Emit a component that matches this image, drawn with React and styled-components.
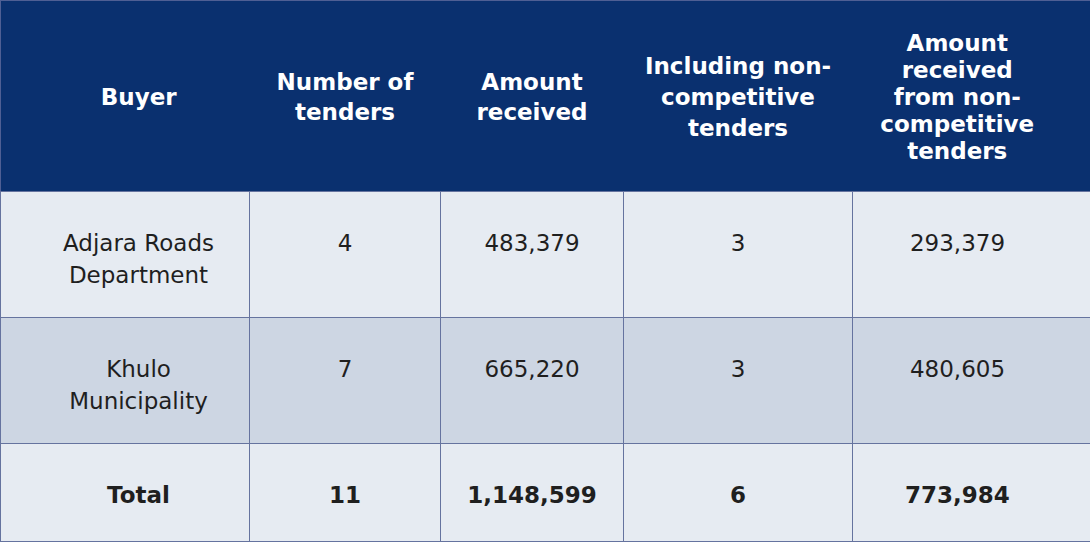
import styled, { createGlobalStyle } from "styled-components";

const GlobalStyle = createGlobalStyle`
  html, body {
    margin: 0;
    padding: 0;
    background: #ffffff;
  }
  body {
    font-family: "DejaVu Sans", Verdana, sans-serif;
  }
`;

const Table = styled.table`
  width: 1090px;
  border-collapse: collapse;
  table-layout: fixed;
  border: 1px solid #4f5f94;
  font-family: "DejaVu Sans", Verdana, sans-serif;
`;

const HeadCell = styled.th`
  background: #0a306f;
  color: #ffffff;
  font-weight: 700;
  font-size: 23px;
  line-height: ${(p) => p.lh || 30}px;
  text-align: center;
  vertical-align: middle;
  height: 191px;
  padding: 2px ${(p) => p.pr || 16}px 0 ${(p) => p.pl || 16}px;
  box-sizing: border-box;
`;

const Row = styled.tr`
  background: ${(p) => (p.shaded ? "#cdd6e3" : "#e6ebf2")};
  height: ${(p) => p.h}px;
`;

const Cell = styled.td`
  color: #1f1f1f;
  font-size: 23px;
  font-weight: ${(p) => (p.bold ? 700 : 400)};
  line-height: 32px;
  text-align: center;
  vertical-align: top;
  padding: ${(p) => p.pt || 34}px ${(p) => p.pr || 16}px 0 ${(p) => p.pl || 16}px;
  border: 1px solid #65739f;
  box-sizing: border-box;
`;

const columns = [
  { width: 249, pl: 50, pr: 23 },
  { width: 191 },
  { width: 183 },
  { width: 229, pl: 14, pr: 14 },
  { width: 238, pl: 22, pr: 50 },
];

const headers = [
  "Buyer",
  "Number of tenders",
  "Amount received",
  "Including non-competitive tenders",
  "Amount received from non-competitive tenders",
];

const rows = [
  { cells: ["Adjara Roads Department", "4", "483,379", "3", "293,379"], h: 126 },
  { cells: ["Khulo Municipality", "7", "665,220", "3", "480,605"], h: 126, shaded: true },
  { cells: ["Total", "11", "1,148,599", "6", "773,984"], h: 98, bold: true },
];

export default function App() {
  return (
    <>
      <GlobalStyle />
      <Table>
        <colgroup>
          {columns.map((c, i) => (
            <col key={i} style={{ width: c.width }} />
          ))}
        </colgroup>
        <thead>
          <tr>
            {headers.map((h, i) => (
              <HeadCell key={i} pl={columns[i].pl} pr={columns[i].pr} lh={i === 4 ? 27 : i === 3 ? 31 : 30}>
                {h}
              </HeadCell>
            ))}
          </tr>
        </thead>
        <tbody>
          {rows.map((r, ri) => (
            <Row key={ri} h={r.h} shaded={r.shaded}>
              {r.cells.map((c, ci) => (
                <Cell
                  key={ci}
                  bold={r.bold}
                  pl={columns[ci].pl}
                  pr={columns[ci].pr}
                  pt={r.bold ? 35 : 35}
                >
                  {c}
                </Cell>
              ))}
            </Row>
          ))}
        </tbody>
      </Table>
    </>
  );
}
